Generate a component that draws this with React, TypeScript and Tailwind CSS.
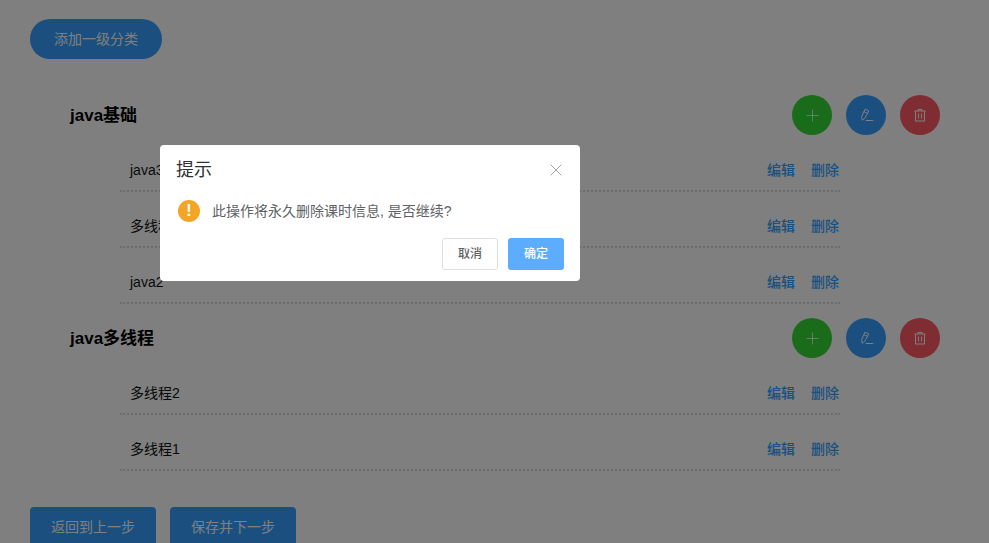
import { Plus, X } from "lucide-react";

interface Section {
  title: string;
  lessons: string[];
}

const sections: Section[] = [
  { title: "java基础", lessons: ["java3", "多线程", "java2"] },
  { title: "java多线程", lessons: ["多线程2", "多线程1"] },
];

const font = "[font-family:'Liberation_Sans','Noto_Sans_CJK_SC',sans-serif]";

function PenIcon() {
  return (
    <svg width="16" height="16" viewBox="0 0 16 16" fill="none" stroke="currentColor" strokeWidth="1">
      <path d="M7 2.2 L10.8 4 L6.6 11.6 L4.2 13.2 L3.6 9.8 Z" />
      <path d="M5.8 4.6 L9.6 6.4" />
      <path d="M7.7 13.5 H15.3" />
    </svg>
  );
}

function TrashIcon() {
  return (
    <svg width="16" height="16" viewBox="0 0 16 16" fill="none" stroke="currentColor" strokeWidth="1">
      <path d="M2.5 4 H13.5" />
      <path d="M6 4 V2.5 H10 V4" />
      <path d="M3.5 4 V14 H12.5 V4" />
      <path d="M6.5 6.5 V11.5 M9.5 6.5 V11.5" />
    </svg>
  );
}

function LessonRow({ name }: { name: string }) {
  return (
    <div className="mb-[6px] ml-[90px] flex h-[50px] w-[720px] items-center justify-between border-b-2 border-dotted border-[#d8d8d8] pl-[10px] pr-px pt-[8px] text-[14px] text-[#111]">
      <span>{name}</span>
      <div className="flex gap-[16px] text-[14px] font-medium text-[#349fff]">
        <span>编辑</span>
        <span>删除</span>
      </div>
    </div>
  );
}

function SectionBlock({ section }: { section: Section }) {
  return (
    <div className="mb-[14px]">
      <div className="mb-[7px] flex h-[40px] items-center justify-between pr-[49px]">
        <span className="ml-[40px] pt-[2px] text-[17px] font-bold text-black">{section.title}</span>
        <div className="flex gap-[14px] text-white">
          <button className="flex h-[40px] w-[40px] items-center justify-center rounded-full bg-[#35d635]">
            <Plus size={19} strokeWidth={1} />
          </button>
          <button className="flex h-[40px] w-[40px] items-center justify-center rounded-full bg-[#349fff]">
            <PenIcon />
          </button>
          <button className="flex h-[40px] w-[40px] items-center justify-center rounded-full bg-[#ff5866]">
            <TrashIcon />
          </button>
        </div>
      </div>
      {section.lessons.map((name) => (
        <LessonRow key={name} name={name} />
      ))}
    </div>
  );
}

export default function App() {
  return (
    <div className={`h-screen overflow-hidden bg-white pl-[30px] pt-[19px] ${font}`}>
      <button className="h-[40px] w-[132px] rounded-[20px] bg-[#349fff] text-[14px] text-white">添加一级分类</button>

      <div className="mt-[36px]">
        {sections.map((section) => (
          <SectionBlock key={section.title} section={section} />
        ))}
      </div>

      <div className="mt-[36px] flex gap-[14px]">
        <button className="h-[40px] w-[126px] rounded-[4px] bg-[#349fff] text-[14px] text-white">返回到上一步</button>
        <button className="h-[40px] w-[126px] rounded-[4px] bg-[#349fff] text-[14px] text-white">保存并下一步</button>
      </div>

      <div className="fixed inset-0 bg-black/50" />

      <div className="fixed left-[160px] top-[145px] h-[136px] w-[420px] rounded-[4px] bg-white px-[16px] pt-[10px]">
        <div className="flex h-[30px] items-center justify-between">
          <span className="text-[18px] text-[#303133]">提示</span>
          <X size={20} strokeWidth={1} className="-mr-[2px] text-[#909399]" />
        </div>
        <div className="mt-[10px] flex h-[32px] items-center gap-[12px] pl-[2px]">
          <span className="flex h-[22px] w-[22px] items-center justify-center rounded-full bg-[#f3a528] text-[16px] font-bold text-white">!</span>
          <span className="text-[14px] text-[#606266]">此操作将永久删除课时信息, 是否继续?</span>
        </div>
        <div className="mt-[11px] flex justify-end gap-[10px]">
          <button className="h-[32px] w-[56px] rounded-[3px] border border-[#dcdfe6] bg-white text-[12px] font-medium text-[#606266]">取消</button>
          <button className="h-[32px] w-[56px] rounded-[3px] bg-[#5cadff] text-[12px] font-medium text-white">确定</button>
        </div>
      </div>
    </div>
  );
}
